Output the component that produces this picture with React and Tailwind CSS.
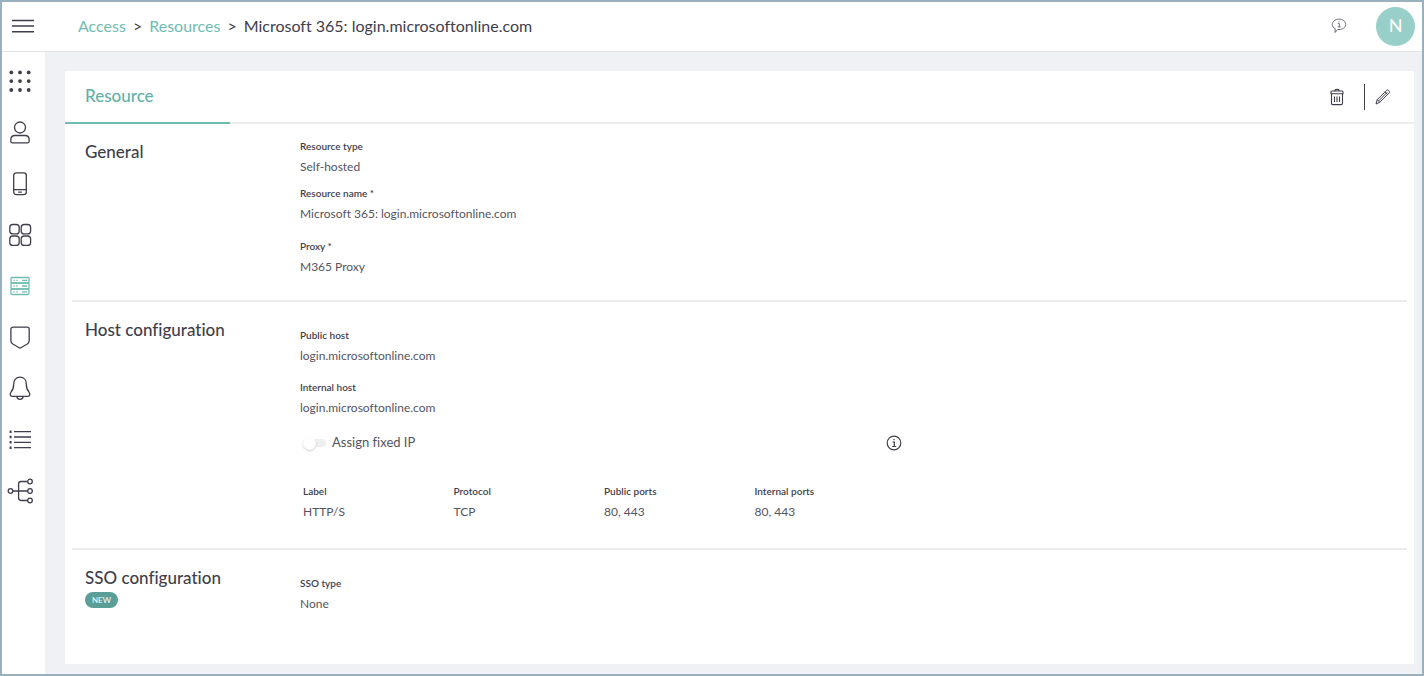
import { useState } from "react";

const NAV_ITEMS = [
  {
    id: "dashboard",
    label: "Dashboard",
    icon: (
      <g fill="currentColor" stroke="none">
        {[4.4, 13.1, 22].map((y) =>
          [5.3, 14, 22.700].map((x) => <circle key={`${x}-${y}`} cx={x} cy={y} r="1.900" />)
        )}
      </g>
    ),
  },
  {
    id: "users",
    label: "Users",
    icon: (
      <>
        <circle cx="14" cy="8.5" r="5.500" />
        <path d="M9 16.500h10c2.600 0 4.200 1.800 4.200 4.400v1.400c0 .9-.6 1.500-1.500 1.500H6.300c-.9 0-1.500-.6-1.500-1.500v-1.400c0-2.600 1.600-4.400 4.200-4.400z" />
      </>
    ),
  },
  {
    id: "devices",
    label: "Devices",
    icon: (
      <>
        <rect x="7.700" y="2.800" width="12.600" height="21.800" rx="2.600" />
        <path d="M7.700 19.700h12.600M12.200 22.200h3.600" />
      </>
    ),
  },
  {
    id: "apps",
    label: "Apps",
    icon: (
      <>
        <rect x="3.800" y="3.500" width="9.400" height="9.400" rx="3" />
        <rect x="15.200" y="3.500" width="9.400" height="9.400" rx="3" />
        <rect x="3.800" y="15" width="9.400" height="9.400" rx="3" />
        <rect x="15.200" y="15" width="9.400" height="9.400" rx="3" />
      </>
    ),
  },
  {
    id: "access",
    label: "Access",
    icon: (
      <>
        <rect x="5" y="5.500" width="18" height="5.500" rx="1" />
        <rect x="5" y="11" width="18" height="6" rx="1" />
        <rect x="5" y="17" width="18" height="5.500" rx="1" />
        <path d="M7.500 8.300h1.200M10.300 8.300h1.200M16 8.300h5M7.500 14h1.200M10.300 14h1.200M16 14h5M7.500 19.800h1.200M10.300 19.800h1.200M16 19.800h5" />
      </>
    ),
  },
  {
    id: "security",
    label: "Security",
    icon: (
      <path d="M7 4.200h14.200a2 2 0 0 1 2 2v11.500c0 1.500-.6 2.500-1.900 3.300L14 25.200l-7.200-4.200c-1.300-.8-1.900-1.800-1.900-3.300V6.200a2 2 0 0 1 2-2z" />
    ),
  },
  {
    id: "alerts",
    label: "Alerts",
    icon: (
      <>
        <path d="M14 3.200c-4 0-6.300 3-6.300 6.800 0 4.500-.4 5.500-2.500 7.800-1.700 2-1.100 4.500.9 4.500h15.800c2 0 2.600-2.500.9-4.500-2.100-2.300-2.500-3.300-2.500-7.800 0-3.800-2.300-6.800-6.300-6.800z" />
        <path d="M10.700 22.400c.4 2 1.700 3 3.300 3s2.900-1 3.300-3" />
      </>
    ),
  },
  {
    id: "logs",
    label: "Logs",
    icon: (
      <>
        <path d="M8 6.700h17M8 12h17M8 17.300h17M8 22.700h17" />
        <path strokeWidth="2.400" d="M3.600 6.700h2M3.600 12h2M3.600 17.300h2M3.600 22.700h2" />
      </>
    ),
  },
  {
    id: "integrations",
    label: "Integrations",
    icon: (
      <>
        <path d="M7 15h14.500M21.500 5.500H15a2.400 2.400 0 0 0-2.400 2.400v14.200a2.400 2.400 0 0 0 2.400 2.400h6.500" />
        <circle cx="4.500" cy="15" r="2.300" />
        <circle cx="24" cy="5.500" r="2.300" />
        <circle cx="24" cy="15" r="2.300" />
        <circle cx="24" cy="24.500" r="2.300" />
      </>
    ),
  },
];

const PORTS = [
  { label: "HTTP/S", protocol: "TCP", publicPorts: "80, 443", internalPorts: "80, 443" },
];

function Header() {
  return (
    <header className="flex h-[50px] items-center border-b border-[#e3e3e6] bg-white pr-[7px] pb-px pl-[10px]">
      <button type="button" aria-label="Toggle menu" className="text-[#3f3e4b]">
        <svg width="22" height="16" viewBox="0 0 22 16" fill="none" stroke="currentColor" strokeWidth="1.500">
          <path d="M0 2.500h22M0 8h22M0 13.700h22" />
        </svg>
      </button>
      <nav aria-label="Breadcrumb" className="ml-11 flex flex-1 items-center gap-[7px] text-base leading-6">
        <a href="#access" className="text-[#6fbdb2]">Access</a>
        <span>&gt;</span>
        <a href="#resources" className="text-[#6fbdb2]">Resources</a>
        <span>&gt;</span>
        <span>Microsoft 365: login.microsoftonline.com</span>
      </nav>
      <button type="button" aria-label="Help" className="mr-[29px] text-[#6b6a74]">
        <svg width="16" height="16" viewBox="0 0 16 16" fill="none" stroke="currentColor" strokeWidth="1">
          <path d="M8 1.200c3.800 0 6.700 2.200 6.700 5.200s-2.900 5.200-6.700 5.200c-.5 0-1 0-1.400-.1L4 14.500l.2-3.800C2.400 9.800 1.300 8.200 1.300 6.400c0-3 2.900-5.200 6.700-5.200z" />
          <path d="M7 5.500h1.300v3.400M6.700 8.900h3M8 3.200v1" />
        </svg>
      </button>
      <button
        type="button"
        aria-label="Account"
        className="flex size-[39px] items-center justify-center rounded-full bg-[#98cfc9] pb-[2px] text-lg text-white"
      >
        N
      </button>
    </header>
  );
}

function Sidebar() {
  return (
    <nav aria-label="Main" className="flex w-[43px] shrink-0 flex-col gap-[23px] bg-white pt-4 pl-1">
      {NAV_ITEMS.map((item) => (
        <a
          key={item.id}
          href={`#${item.id}`}
          aria-label={item.label}
          className={item.id === "access" ? "size-7 text-[#6fbdb2]" : "size-7 text-[#3f3e4b]"}
        >
          <svg
            width="28"
            height="28"
            viewBox="0 0 28 28"
            fill="none"
            stroke="currentColor"
            strokeWidth="1.300"
            strokeLinejoin="round"
          >
            {item.icon}
          </svg>
        </a>
      ))}
    </nav>
  );
}

function Section({ title, badge, className, children }) {
  return (
    <section className="mx-[7px] flex border-b-2 border-[#ececee] pl-[13px] last:border-b-0">
      <div className="w-[215px] shrink-0 pt-4">
        <h2 className="text-[17px] leading-6 font-medium">{title}</h2>
        {badge && (
          <span className="mt-[2px] flex h-4 w-[33px] items-center justify-center rounded-full bg-[#5b9d97] text-[8px] text-white">
            {badge}
          </span>
        )}
      </div>
      <div className={`max-w-[602px] flex-1 ${className}`}>{children}</div>
    </section>
  );
}

function Field({ label, value }) {
  return (
    <div>
      <dt className="text-[10px] leading-[18px] font-semibold">{label}</dt>
      <dd className="text-xs leading-6 text-[#55545f]">{value}</dd>
    </div>
  );
}

function FixedIpToggle() {
  const [enabled, setEnabled] = useState(false);

  return (
    <div className="mt-[11px] flex h-6 items-center justify-between pl-[3px]">
      <label className="flex items-center gap-[6px] text-[13px] text-[#55545f]">
        <input
          type="checkbox"
          role="switch"
          checked={enabled}
          onChange={(e) => setEnabled(e.target.checked)}
          className="flex h-2 w-[23px] appearance-none items-center rounded-full bg-[#efefef] before:size-[13px] before:rounded-full before:bg-white before:shadow-[0_1px_2px_rgba(0,0,0,0.2)] checked:justify-end checked:bg-[#98cfc9]"
        />
        Assign fixed IP
      </label>
      <button type="button" aria-label="About fixed IP">
        <svg width="16" height="16" viewBox="0 0 16 16" fill="none" stroke="currentColor" strokeWidth="1.200">
          <circle cx="8" cy="8" r="6.800" />
          <path d="M6.500 7h1.800v4.500M6.200 11.500h4M8 3.900v1.400" />
        </svg>
      </button>
    </div>
  );
}

function PortsTable() {
  return (
    <table className="mt-[27px] ml-[3px] w-full table-fixed text-left">
      <thead>
        <tr className="text-[10px] leading-[18px]">
          <th className="font-semibold">Label</th>
          <th className="font-semibold">Protocol</th>
          <th className="font-semibold">Public ports</th>
          <th className="font-semibold">Internal ports</th>
        </tr>
      </thead>
      <tbody>
        {PORTS.map((row) => (
          <tr key={row.label} className="text-xs leading-6 text-[#55545f]">
            <td>{row.label}</td>
            <td>{row.protocol}</td>
            <td>{row.publicPorts}</td>
            <td>{row.internalPorts}</td>
          </tr>
        ))}
      </tbody>
    </table>
  );
}

export default function App() {
  return (
    <div className="flex min-h-screen flex-col border-2 border-[#9bb0bf] bg-white font-['Lato',sans-serif] text-[#3f3e4b] [font-variant-ligatures:none]">
      <Header />
      <div className="flex flex-1">
        <Sidebar />
        <main className="flex flex-1 flex-col bg-[#f0f1f5] pt-[19px] pr-2 pb-[10px] pl-5">
          <div className="flex-1 bg-white">
            <div className="flex h-[53px] border-b-2 border-[#ececee]">
              <button
                type="button"
                className="-mb-[2px] w-[165px] border-b-2 border-[#6fbdb2] pb-[2px] pl-5 text-left text-[17px] font-medium text-[#62b1a6]"
              >
                Resource
              </button>
              <div className="ml-auto flex items-center pr-[22px]">
                <button type="button" aria-label="Delete resource">
                  <svg width="16" height="18" viewBox="0 0 16 18" fill="none" stroke="currentColor" strokeWidth="1.100" strokeLinejoin="round">
                    <path d="M3 3h10a1 1 0 0 1 1 1v1.700H2V4a1 1 0 0 1 1-1zM5.500 3c.2-1.100 1-1.600 2.500-1.600s2.300.5 2.500 1.600M2.500 5.700v9.600c0 .8.5 1.300 1.300 1.300h8.400c.8 0 1.300-.5 1.300-1.300V5.700M5.500 8.500v5.500M8 8.500v5.500M10.500 8.500v5.500" />
                  </svg>
                </button>
                <span className="ml-[19px] h-[26px] w-px bg-[#3f3e4b]" />
                <button type="button" aria-label="Edit resource" className="ml-[9px]">
                  <svg width="18" height="18" viewBox="0 0 18 18" fill="none" stroke="currentColor" strokeWidth="1" strokeLinejoin="round">
                    <path d="M2 16l1.200-4.300 9-9c.9-.9 1.800-.9 2.600-.1.9.9.9 1.800 0 2.700l-9 9zM3.200 11.700l2.600 2.600M4.500 13l8.800-8.800M11 3.900l2.700 2.700" />
                  </svg>
                </button>
              </div>
            </div>

            <Section title="General" className="pt-[13px] pb-[21px]">
              <dl>
                <Field label="Resource type" value="Self-hosted" />
                <div className="mt-[5px] flex flex-col gap-[11px]">
                  <Field label="Resource name *" value="Microsoft 365: login.microsoftonline.com" />
                  <Field label="Proxy *" value="M365 Proxy" />
                </div>
              </dl>
            </Section>

            <Section title="Host configuration" className="pt-6 pb-6">
              <dl className="flex flex-col gap-[10px]">
                <Field label="Public host" value="login.microsoftonline.com" />
                <Field label="Internal host" value="login.microsoftonline.com" />
              </dl>
              <FixedIpToggle />
              <PortsTable />
            </Section>

            <Section title="SSO configuration" badge="NEW" className="pt-6">
              <dl>
                <Field label="SSO type" value="None" />
              </dl>
            </Section>
          </div>
        </main>
      </div>
    </div>
  );
}
